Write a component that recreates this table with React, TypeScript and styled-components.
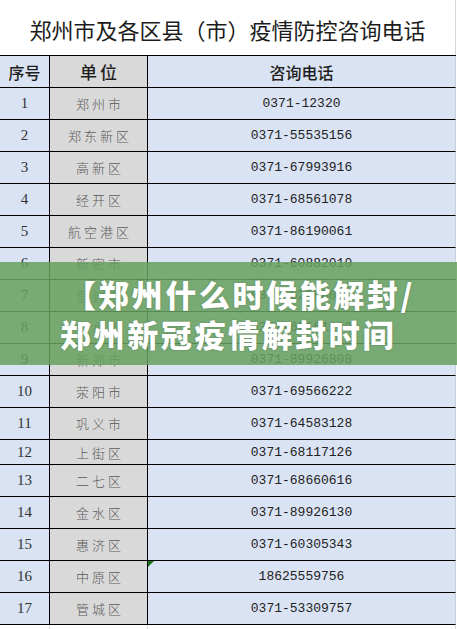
import React from 'react';
import styled, { createGlobalStyle } from 'styled-components';

const GlobalStyle = createGlobalStyle`
  html, body {
    margin: 0;
    padding: 0;
    background: #fff;
  }
`;

const Page = styled.div`
  position: relative;
  width: 457px;
  height: 629px;
  overflow: hidden;
  background: #fff;
  font-family: "Noto Sans CJK SC", "Noto Sans", sans-serif;
`;

const Title = styled.h1`
  margin: 0;
  height: 55px;
  display: flex;
  align-items: center;
  justify-content: center;
  padding-top: 2px;
  box-sizing: border-box;
  font-size: 22px;
  font-weight: 400;
  color: #1c1c1c;
  border-right: 1px solid #d6d6d6;
  width: 456px;
`;

const Table = styled.div`
  border-top: 1px solid #000;
  width: 456px;
`;

const Row = styled.div<{ h: number }>`
  display: grid;
  grid-template-columns: 50px 98px 308px;
  height: ${({ h }) => h}px;
`;

const Cell = styled.div<{ gray?: boolean; last?: boolean }>`
  position: relative;
  box-sizing: border-box;
  display: flex;
  align-items: center;
  justify-content: center;
  background: ${({ gray }) => (gray ? '#d9d9d9' : '#dae3f3')};
  border-bottom: 1px solid #000;
  border-right: 1px solid ${({ last }) => (last ? '#c9ced8' : '#000')};
`;

const HeadText = styled.span<{ spacing?: number; size?: number }>`
  font-size: ${({ size }) => size ?? 16}px;
  font-weight: 500;
  color: #1e1e1e;
  letter-spacing: ${({ spacing }) => spacing ?? 0}px;
  padding-left: ${({ spacing }) => spacing ?? 0}px;
`;

const Num = styled.span`
  font-family: "Liberation Serif", "DejaVu Serif", serif;
  font-size: 15px;
  color: #333;
`;

const Unit = styled.span`
  font-family: "Noto Sans CJK SC", sans-serif;
  font-size: 13px;
  font-weight: 300;
  color: #5a5a5a;
  letter-spacing: 3px;
  padding-left: 3px;
`;

const Phone = styled.span`
  font-family: "Liberation Mono", "DejaVu Sans Mono", monospace;
  font-size: 13px;
  color: #222;
`;

const Marker = styled.span`
  position: absolute;
  top: 0;
  left: 0;
  width: 0;
  height: 0;
  border-top: 6px solid #187318;
  border-right: 6px solid transparent;
`;

const Tail = styled.div`
  display: grid;
  grid-template-columns: 50px 98px 308px;
  height: 5px;
`;

const TailCell = styled.div`
  border-right: 1px solid #dcdcdc;
`;

const Banner = styled.div`
  position: absolute;
  top: 262px;
  left: 0;
  right: 0;
  height: 103px;
  background: rgba(104, 161, 96, 0.86);
  display: flex;
  flex-direction: column;
  justify-content: center;
  padding-left: 60px;
  box-sizing: border-box;
`;

const BannerLine = styled.div`
  font-family: "Noto Sans CJK SC", sans-serif;
  font-weight: 900;
  font-size: 31px;
  line-height: 40px;
  letter-spacing: 2.6px;
  color: #fff;
  white-space: nowrap;
  text-shadow: 0 0 2px rgba(40, 60, 40, 0.35);
`;

const Bracket = styled.span`
  display: inline-block;
  width: 38px;
  text-align: right;
  letter-spacing: 0;
  padding-right: 2px;
  box-sizing: border-box;
`;

const rows = [
  { no: '1', unit: '郑州市', phone: '0371-12320' },
  { no: '2', unit: '郑东新区', phone: '0371-55535156' },
  { no: '3', unit: '高新区', phone: '0371-67993916' },
  { no: '4', unit: '经开区', phone: '0371-68561078' },
  { no: '5', unit: '航空港区', phone: '0371-86190061' },
  { no: '6', unit: '新密市', phone: '0371-60882010' },
  { no: '7', unit: '登封市', phone: '0371-62868088' },
  { no: '8', unit: '中牟县', phone: '0371-62161110' },
  { no: '9', unit: '新郑市', phone: '0371-89926808' },
  { no: '10', unit: '荥阳市', phone: '0371-69566222' },
  { no: '11', unit: '巩义市', phone: '0371-64583128' },
  { no: '12', unit: '上街区', phone: '0371-68117126', h: 25 },
  { no: '13', unit: '二七区', phone: '0371-68660616' },
  { no: '14', unit: '金水区', phone: '0371-89926130' },
  { no: '15', unit: '惠济区', phone: '0371-60305343' },
  { no: '16', unit: '中原区', phone: '18625559756', mark: true },
  { no: '17', unit: '管城区', phone: '0371-53309757' },
];

export default function App() {
  return (
    <>
      <GlobalStyle />
      <Page>
        <Title>郑州市及各区县（市）疫情防控咨询电话</Title>
        <Table>
          <Row h={32}>
            <Cell><HeadText>序号</HeadText></Cell>
            <Cell gray><HeadText size={17} spacing={3}>单位</HeadText></Cell>
            <Cell last><HeadText>咨询电话</HeadText></Cell>
          </Row>
          {rows.map((r) => (
            <Row key={r.no} h={r.h ?? 32}>
              <Cell><Num>{r.no}</Num></Cell>
              <Cell gray><Unit>{r.unit}</Unit></Cell>
              <Cell last>
                {r.mark && <Marker />}
                <Phone>{r.phone}</Phone>
              </Cell>
            </Row>
          ))}
          <Tail>
            <TailCell />
            <TailCell />
            <TailCell />
          </Tail>
        </Table>
        <Banner>
          <BannerLine><Bracket>【</Bracket>郑州什么时候能解封/</BannerLine>
          <BannerLine>郑州新冠疫情解封时间</BannerLine>
        </Banner>
      </Page>
    </>
  );
}
